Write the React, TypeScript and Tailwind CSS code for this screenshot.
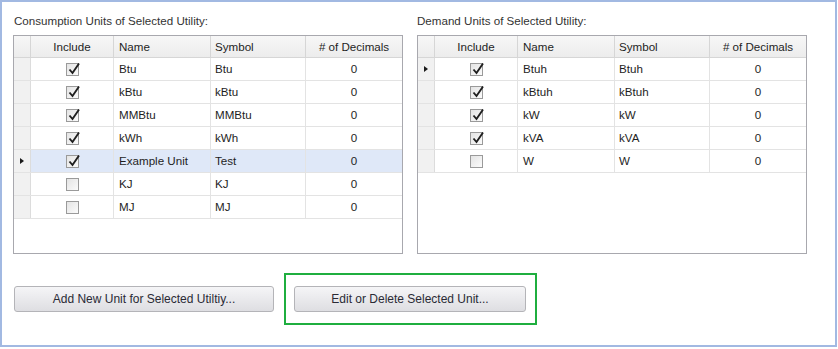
import React from "react";

type Unit = { name: string; symbol: string; decimals: number; include: boolean };

const consumption: Unit[] = [
  { name: "Btu", symbol: "Btu", decimals: 0, include: true },
  { name: "kBtu", symbol: "kBtu", decimals: 0, include: true },
  { name: "MMBtu", symbol: "MMBtu", decimals: 0, include: true },
  { name: "kWh", symbol: "kWh", decimals: 0, include: true },
  { name: "Example Unit", symbol: "Test", decimals: 0, include: true },
  { name: "KJ", symbol: "KJ", decimals: 0, include: false },
  { name: "MJ", symbol: "MJ", decimals: 0, include: false },
];

const demand: Unit[] = [
  { name: "Btuh", symbol: "Btuh", decimals: 0, include: true },
  { name: "kBtuh", symbol: "kBtuh", decimals: 0, include: true },
  { name: "kW", symbol: "kW", decimals: 0, include: true },
  { name: "kVA", symbol: "kVA", decimals: 0, include: true },
  { name: "W", symbol: "W", decimals: 0, include: false },
];

const cols = "grid grid-cols-[17px_83px_97px_95px_96px]";

function CheckBox({ checked }: { checked: boolean }) {
  return (
    <span className="relative inline-block h-[13px] w-[13px] border border-[#9a9a9a] bg-gradient-to-br from-[#e4e4e4] to-[#fbfbfb]">
      {checked && (
        <svg
          viewBox="0 0 14 14"
          className="absolute left-[0px] top-[-2px] h-[14px] w-[14px]"
        >
          <path
            d="M2.5 7.5 L5.5 11 L12 1.5"
            fill="none"
            stroke="#1f1f1f"
            strokeWidth="1.9"
            strokeLinejoin="miter"
          />
        </svg>
      )}
    </span>
  );
}

function UnitGrid({ rows, current }: { rows: Unit[]; current: number }) {
  return (
    <div className="h-[219px] w-[390px] border border-[#a8a8ae] bg-white">
      <div className={`${cols} h-[22px] border-b border-[#d6d6d6] bg-gradient-to-b from-[#f7f7f7] to-[#ececec] text-[#1e1e1e]`}>
        <div className="border-r border-[#d6d6d6]" />
        <div className="flex items-center justify-center border-r border-[#d6d6d6]">Include</div>
        <div className="flex items-center border-r border-[#d6d6d6] pl-[5px]">Name</div>
        <div className="flex items-center border-r border-[#d6d6d6] pl-[4px]">Symbol</div>
        <div className="flex items-center justify-center">
          # of Decimals
        </div>
      </div>
      {rows.map((u, i) => {
        const sel = i === current && current === 4;
        return (
          <div
            key={u.name}
            className={`${cols} h-[23px] border-b border-[#e3e3e3] ${sel ? "bg-[#dfe8f8]" : ""}`}
          >
            <div className="flex items-center justify-center border-r border-[#dcdcdc] bg-[#f1f1f1]">
              {i === current && (
                <span className="ml-[-1px] h-0 w-0 border-y-[3.5px] border-l-[4px] border-y-transparent border-l-[#1a1a1a]" />
              )}
            </div>
            <div className="flex items-center justify-center border-r border-[#e3e3e3]">
              <CheckBox checked={u.include} />
            </div>
            <div className="flex items-center border-r border-[#e3e3e3] pl-[5px]">{u.name}</div>
            <div className="flex items-center border-r border-[#e3e3e3] pl-[4px]">{u.symbol}</div>
            <div className="flex items-center justify-center">{u.decimals}</div>
          </div>
        );
      })}
    </div>
  );
}

function Button({ label, width }: { label: string; width: string }) {
  return (
    <button
      className={`${width} h-[26px] rounded-[3px] border border-[#b4b4b8] bg-gradient-to-b from-[#f5f5f7] to-[#dedee2] text-[12px] text-[#2a2a35]`}
    >
      {label}
    </button>
  );
}

export default function App() {
  return (
    <div className="h-[349px] w-[838px] bg-white font-['Liberation_Sans',Arial,sans-serif] text-[11.6px] text-[#1e1e1e]">
      <div className="h-[347px] w-[837px] border-2 border-[#a2b9e2] pl-[11px] pt-[10px]">
        <div className="flex gap-[14px]">
          <div className="flex flex-col">
            <div className="mb-[8px] h-[15px] pl-[1px] text-[#333]">Consumption Units of Selected Utility:</div>
            <UnitGrid rows={consumption} current={4} />
          </div>
          <div className="flex flex-col">
            <div className="mb-[8px] h-[15px] text-[#333]">Demand Units of Selected Utility:</div>
            <UnitGrid rows={demand} current={0} />
          </div>
        </div>
        <div className="mt-[19px] flex items-center">
          <div className="ml-[1px]">
            <Button label="Add New Unit for Selected Utiltiy..." width="w-[260px]" />
          </div>
          <div className="ml-[10px] flex h-[52px] w-[253px] items-center border-2 border-[#1fae3f] pl-[8px]">
            <Button label="Edit or Delete Selected Unit..." width="w-[232px]" />
          </div>
        </div>
      </div>
    </div>
  );
}
